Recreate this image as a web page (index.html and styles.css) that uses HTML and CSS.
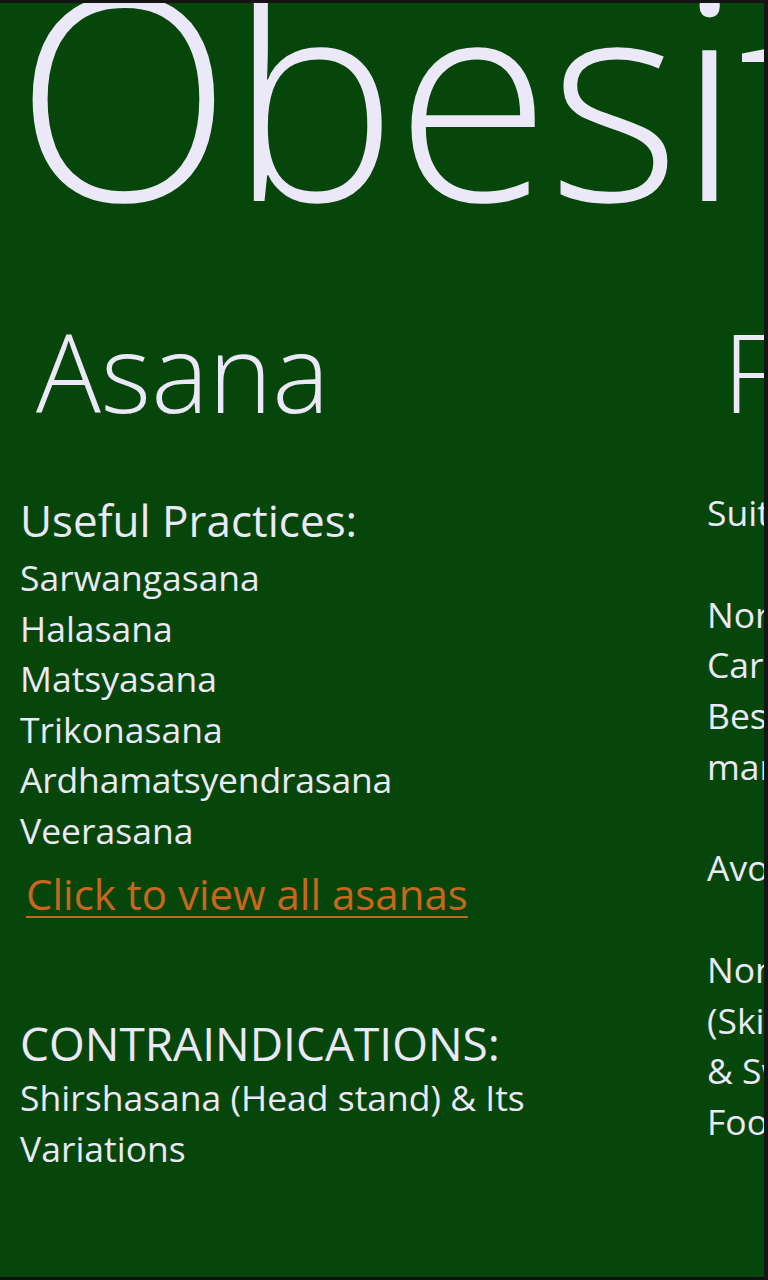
FILE: index.html
```html
<!DOCTYPE html>
<html>
<head>
<meta charset="utf-8">
<link rel="stylesheet" href="styles.css">
</head>
<body>
<div class="screen">
  <div class="title">Obesity</div>
  <div class="pivot">
    <section class="pivot-item">
      <h2 class="pivot-header">Asana</h2>
      <div class="group-title">Useful Practices:</div>
      <ul class="list">
        <li>Sarwangasana</li>
        <li>Halasana</li>
        <li>Matsyasana</li>
        <li>Trikonasana</li>
        <li>Ardhamatsyendrasana</li>
        <li>Veerasana</li>
      </ul>
      <a class="link" href="#">Click to view all asanas</a>
      <div class="group-title contra">CONTRAINDICATIONS:</div>
      <p class="body">Shirshasana (Head stand) &amp; Its Variations</p>
    </section>
    <section class="pivot-item">
      <h2 class="pivot-header">Food</h2>
      <div class="lines">
        <span>Suitable Diet:</span>
        <span class="blank"></span>
        <span>Normal diet with less</span>
        <span>Carbohydrates &amp; fats.</span>
        <span>Best to have fruits &amp;</span>
        <span>many green vegetables.</span>
        <span class="blank"></span>
        <span>Avoid:</span>
        <span class="blank"></span>
        <span>Non-veg, fried food</span>
        <span>(Skimmed milk is ok)</span>
        <span>&amp; Sweets, Junk</span>
        <span>Food.</span>
      </div>
    </section>
  </div>
</div>
</body>
</html>
```
FILE: styles.css
```css
html, body {
  margin: 0;
  padding: 0;
  background: #111;
}
.screen {
  width: 768px;
  height: 1280px;
  box-sizing: border-box;
  border-top: 3px solid #151515;
  border-right: 4px solid #151515;
  border-bottom: 3px solid #101010;
  background: #07460a;
  overflow: hidden;
  color: #ebe8f8;
  font-family: "Open Sans", "Noto Sans", sans-serif;
}
.title {
  font-size: 284px;
  font-weight: 300;
  line-height: 176px;
  margin-left: 15px;
  letter-spacing: -3px;
  white-space: nowrap;
}
.pivot {
  display: flex;
  margin-top: 133px;
}
.pivot-item {
  flex: 0 0 687px;
  box-sizing: border-box;
  padding-left: 20px;
}
.pivot-header {
  margin: 0 0 60px 16px;
  font-size: 108px;
  font-weight: 350;
  line-height: 120px;
  white-space: nowrap;
}
.group-title {
  font-size: 44px;
  line-height: 56px;
  white-space: nowrap;
}
.list {
  list-style: none;
  margin: 4px 0 0;
  padding: 0;
}
.list li, .body {
  font-size: 35.5px;
  line-height: 50.5px;
}
.list li:nth-child(5) {
  letter-spacing: -0.2px;
}
.link {
  display: inline-block;
  margin: 14px 0 0 6px;
  font-size: 42px;
  line-height: 50px;
  color: #c8661e;
  text-decoration: underline;
  text-underline-offset: 6px;
  text-decoration-thickness: 2px;
}
.contra {
  font-size: 46px;
  margin-top: 96px;
}
.body {
  margin: 1px 0 0;
  width: 560px;
}
.lines {
  display: flex;
  flex-direction: column;
  margin-top: -5px;
}
.lines span {
  display: block;
  height: 50.75px;
  font-size: 35.5px;
  line-height: 50.75px;
  white-space: nowrap;
}
```
